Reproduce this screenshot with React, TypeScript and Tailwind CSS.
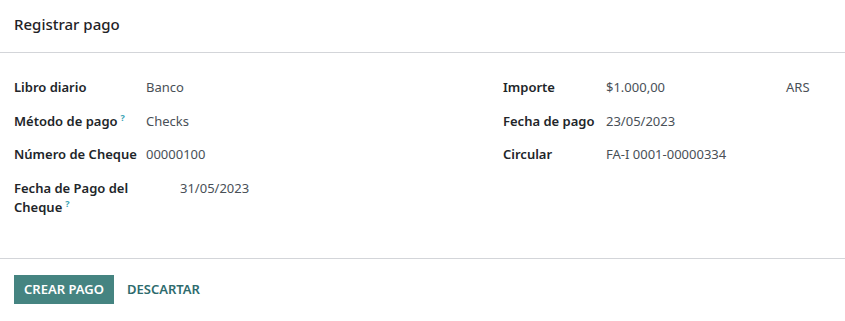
const Help = () => (
  <sup className="ml-[3px] text-[9px] font-bold text-[#3aa3b5] relative -top-[5px]">?</sup>
);

type Row = { label: React.ReactNode; value: React.ReactNode; extra?: string; valueClass?: string };

const left: Row[] = [
  { label: 'Libro diario', value: 'Banco' },
  { label: <>Método de pago<Help /></>, value: 'Checks' },
  { label: 'Número de Cheque', value: '00000100' },
  {
    label: <>Fecha de Pago del<br />Cheque<Help /></>,
    value: '31/05/2023',
    valueClass: 'pl-[34px]',
  },
];

const right: Row[] = [
  { label: 'Importe', value: '$1.000,00', extra: 'ARS' },
  { label: 'Fecha de pago', value: '23/05/2023' },
  { label: 'Circular', value: 'FA-I 0001-00000334' },
];

export default function App() {
  return (
    <div
      className="w-[845px] h-[321px] bg-white text-[#212529] text-[13px]"
      style={{ fontFamily: '"Noto Sans", "Open Sans", sans-serif' }}
    >
      <header className="h-[53px] flex items-center px-[14px] border-b border-[#d3d5d9]">
        <h1 className="text-[15px] font-medium text-[#1f2327] -mt-[4px]">Registrar pago</h1>
      </header>

      <div className="h-[206px] grid grid-cols-[489px_1fr] pl-[14px] pt-[25px] border-b border-[#d3d5d9]">
        <div className="flex flex-col">
          {left.map((r, i) => (
            <div key={i} className="flex min-h-[33.5px] leading-[19px]">
              <div className="w-[132px] shrink-0 font-semibold">{r.label}</div>
              <div className={`text-[#495057] ${r.valueClass ?? ''}`}>{r.value}</div>
            </div>
          ))}
        </div>
        <div className="flex flex-col">
          {right.map((r, i) => (
            <div key={i} className="flex min-h-[33.5px] leading-[19px]">
              <div className="w-[103px] shrink-0 font-semibold">{r.label}</div>
              <div className="w-[180px] text-[#495057]">{r.value}</div>
              {r.extra && <div className="text-[#495057]">{r.extra}</div>}
            </div>
          ))}
        </div>
      </div>

      <footer className="flex items-center gap-[13px] px-[14px] pt-[16px]">
        <button className="h-[29px] w-[100px] bg-[#458481] text-white font-semibold uppercase text-[13px]">
          Crear pago
        </button>
        <button className="h-[29px] text-[#2e6b6d] font-semibold uppercase text-[13px]">
          Descartar
        </button>
      </footer>
    </div>
  );
}
